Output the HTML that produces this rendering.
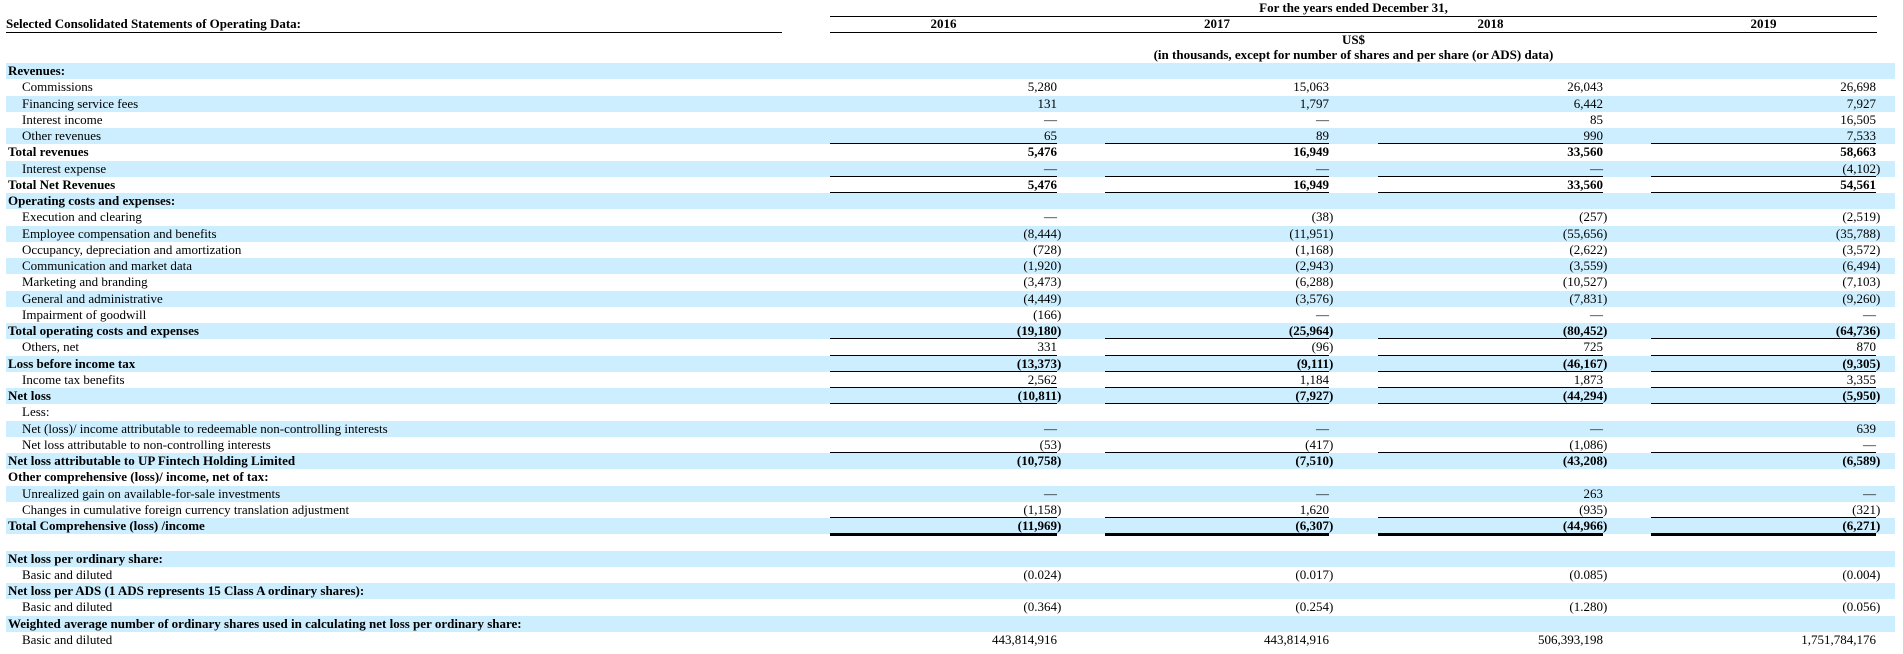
<!DOCTYPE html>
<html><head><meta charset="utf-8"><style>
*{margin:0;padding:0;box-sizing:border-box}
body{width:1903px;height:654px;background:#fff;position:relative;overflow:hidden;font-family:"Liberation Serif","Times New Roman",serif;font-size:13px;color:#000}
.a{position:absolute}
.r{position:absolute;left:6px;width:1889px;height:16.25px;line-height:16px;white-space:nowrap}
.b{background:#cceeff}
.B{font-weight:bold}
.l{position:absolute;left:16px;top:0}
.B .l{left:2px}
.v{position:absolute;top:0;text-align:right;width:227px}
.c1{left:824px}.c2{left:1096px}.c3{left:1370px}.c4{left:1643px}
.p{position:absolute}
.ln{position:absolute;height:1px;background:#000}
.x1{left:830px;width:227px}.x2{left:1105px;width:224px}.x3{left:1378px;width:225px}.x4{left:1651px;width:225px}
.h{font-weight:bold;position:absolute;white-space:nowrap;text-align:center;line-height:16px}
</style></head><body>
<div class="h" style="left:6px;top:16px;text-align:left">Selected Consolidated Statements of Operating Data:</div>
<div class="a" style="left:6px;top:32px;width:776px;height:1px;background:#000"></div>
<div class="h" style="left:830px;top:0px;width:1047px">For the years ended December 31,</div>
<div class="a" style="left:830px;top:16px;width:1047px;height:1px;background:#000"></div>
<div class="h" style="left:830px;top:16px;width:227px">2016</div>
<div class="h" style="left:1105px;top:16px;width:224px">2017</div>
<div class="h" style="left:1378px;top:16px;width:225px">2018</div>
<div class="h" style="left:1651px;top:16px;width:225px">2019</div>
<div class="a" style="left:830px;top:32px;width:1047px;height:1px;background:#000"></div>
<div class="h" style="left:830px;top:33px;width:1047px;line-height:14px">US$</div>
<div class="h" style="left:830px;top:47px;width:1047px;line-height:15px">(in thousands, except for number of shares and per share (or ADS) data)</div>

<div class="r b B" style="top:63px"><span class="l">Revenues:</span></div>
<div class="r" style="top:79px"><span class="l">Commissions</span><div class="v c1">5,280</div><div class="v c2">15,063</div><div class="v c3">26,043</div><div class="v c4">26,698</div></div>
<div class="r b" style="top:96px"><span class="l">Financing service fees</span><div class="v c1">131</div><div class="v c2">1,797</div><div class="v c3">6,442</div><div class="v c4">7,927</div></div>
<div class="r" style="top:112px"><span class="l">Interest income</span><div class="v c1">—</div><div class="v c2">—</div><div class="v c3">85</div><div class="v c4">16,505</div></div>
<div class="r b" style="top:128px"><span class="l">Other revenues</span><div class="v c1">65</div><div class="v c2">89</div><div class="v c3">990</div><div class="v c4">7,533</div></div>
<div class="r B" style="top:144px"><span class="l">Total revenues</span><div class="v c1">5,476</div><div class="v c2">16,949</div><div class="v c3">33,560</div><div class="v c4">58,663</div></div>
<div class="r b" style="top:161px"><span class="l">Interest expense</span><div class="v c1">—</div><div class="v c2">—</div><div class="v c3">—</div><div class="v c4">(4,102<span class="p">)</span></div></div>
<div class="r B" style="top:177px"><span class="l">Total Net Revenues</span><div class="v c1">5,476</div><div class="v c2">16,949</div><div class="v c3">33,560</div><div class="v c4">54,561</div></div>
<div class="r b B" style="top:193px"><span class="l">Operating costs and expenses:</span></div>
<div class="r" style="top:209px"><span class="l">Execution and clearing</span><div class="v c1">—</div><div class="v c2">(38<span class="p">)</span></div><div class="v c3">(257<span class="p">)</span></div><div class="v c4">(2,519<span class="p">)</span></div></div>
<div class="r b" style="top:226px"><span class="l">Employee compensation and benefits</span><div class="v c1">(8,444<span class="p">)</span></div><div class="v c2">(11,951<span class="p">)</span></div><div class="v c3">(55,656<span class="p">)</span></div><div class="v c4">(35,788<span class="p">)</span></div></div>
<div class="r" style="top:242px"><span class="l">Occupancy, depreciation and amortization</span><div class="v c1">(728<span class="p">)</span></div><div class="v c2">(1,168<span class="p">)</span></div><div class="v c3">(2,622<span class="p">)</span></div><div class="v c4">(3,572<span class="p">)</span></div></div>
<div class="r b" style="top:258px"><span class="l">Communication and market data</span><div class="v c1">(1,920<span class="p">)</span></div><div class="v c2">(2,943<span class="p">)</span></div><div class="v c3">(3,559<span class="p">)</span></div><div class="v c4">(6,494<span class="p">)</span></div></div>
<div class="r" style="top:274px"><span class="l">Marketing and branding</span><div class="v c1">(3,473<span class="p">)</span></div><div class="v c2">(6,288<span class="p">)</span></div><div class="v c3">(10,527<span class="p">)</span></div><div class="v c4">(7,103<span class="p">)</span></div></div>
<div class="r b" style="top:291px"><span class="l">General and administrative</span><div class="v c1">(4,449<span class="p">)</span></div><div class="v c2">(3,576<span class="p">)</span></div><div class="v c3">(7,831<span class="p">)</span></div><div class="v c4">(9,260<span class="p">)</span></div></div>
<div class="r" style="top:307px"><span class="l">Impairment of goodwill</span><div class="v c1">(166<span class="p">)</span></div><div class="v c2">—</div><div class="v c3">—</div><div class="v c4">—</div></div>
<div class="r b B" style="top:323px"><span class="l">Total operating costs and expenses</span><div class="v c1">(19,180<span class="p">)</span></div><div class="v c2">(25,964<span class="p">)</span></div><div class="v c3">(80,452<span class="p">)</span></div><div class="v c4">(64,736<span class="p">)</span></div></div>
<div class="r" style="top:339px"><span class="l">Others, net</span><div class="v c1">331</div><div class="v c2">(96<span class="p">)</span></div><div class="v c3">725</div><div class="v c4">870</div></div>
<div class="r b B" style="top:356px"><span class="l">Loss before income tax</span><div class="v c1">(13,373<span class="p">)</span></div><div class="v c2">(9,111<span class="p">)</span></div><div class="v c3">(46,167<span class="p">)</span></div><div class="v c4">(9,305<span class="p">)</span></div></div>
<div class="r" style="top:372px"><span class="l">Income tax benefits</span><div class="v c1">2,562</div><div class="v c2">1,184</div><div class="v c3">1,873</div><div class="v c4">3,355</div></div>
<div class="r b B" style="top:388px"><span class="l">Net loss</span><div class="v c1">(10,811<span class="p">)</span></div><div class="v c2">(7,927<span class="p">)</span></div><div class="v c3">(44,294<span class="p">)</span></div><div class="v c4">(5,950<span class="p">)</span></div></div>
<div class="r" style="top:404px"><span class="l">Less:</span></div>
<div class="r b" style="top:421px"><span class="l">Net (loss)/ income attributable to redeemable non-controlling interests</span><div class="v c1">—</div><div class="v c2">—</div><div class="v c3">—</div><div class="v c4">639</div></div>
<div class="r" style="top:437px"><span class="l">Net loss attributable to non-controlling interests</span><div class="v c1">(53<span class="p">)</span></div><div class="v c2">(417<span class="p">)</span></div><div class="v c3">(1,086<span class="p">)</span></div><div class="v c4">—</div></div>
<div class="r b B" style="top:453px"><span class="l">Net loss attributable to UP Fintech Holding Limited</span><div class="v c1">(10,758<span class="p">)</span></div><div class="v c2">(7,510<span class="p">)</span></div><div class="v c3">(43,208<span class="p">)</span></div><div class="v c4">(6,589<span class="p">)</span></div></div>
<div class="r B" style="top:469px"><span class="l">Other comprehensive (loss)/ income, net of tax:</span></div>
<div class="r b" style="top:486px"><span class="l">Unrealized gain on available-for-sale investments</span><div class="v c1">—</div><div class="v c2">—</div><div class="v c3">263</div><div class="v c4">—</div></div>
<div class="r" style="top:502px"><span class="l">Changes in cumulative foreign currency translation adjustment</span><div class="v c1">(1,158<span class="p">)</span></div><div class="v c2">1,620</div><div class="v c3">(935<span class="p">)</span></div><div class="v c4">(321<span class="p">)</span></div></div>
<div class="r b B" style="top:518px"><span class="l">Total Comprehensive (loss) /income</span><div class="v c1">(11,969<span class="p">)</span></div><div class="v c2">(6,307<span class="p">)</span></div><div class="v c3">(44,966<span class="p">)</span></div><div class="v c4">(6,271<span class="p">)</span></div></div>
<div class="r b B" style="top:551px"><span class="l">Net loss per ordinary share:</span></div>
<div class="r" style="top:567px"><span class="l">Basic and diluted</span><div class="v c1">(0.024<span class="p">)</span></div><div class="v c2">(0.017<span class="p">)</span></div><div class="v c3">(0.085<span class="p">)</span></div><div class="v c4">(0.004<span class="p">)</span></div></div>
<div class="r b B" style="top:583px"><span class="l">Net loss per ADS (1 ADS represents 15 Class A ordinary shares):</span></div>
<div class="r" style="top:599px"><span class="l">Basic and diluted</span><div class="v c1">(0.364<span class="p">)</span></div><div class="v c2">(0.254<span class="p">)</span></div><div class="v c3">(1.280<span class="p">)</span></div><div class="v c4">(0.056<span class="p">)</span></div></div>
<div class="r b B" style="top:616px"><span class="l">Weighted average number of ordinary shares used in calculating net loss per ordinary share:</span></div>
<div class="r" style="top:632px"><span class="l">Basic and diluted</span><div class="v c1">443,814,916</div><div class="v c2">443,814,916</div><div class="v c3">506,393,198</div><div class="v c4">1,751,784,176</div></div>

<div class="ln x1" style="top:143px"></div><div class="ln x2" style="top:143px"></div><div class="ln x3" style="top:143px"></div><div class="ln x4" style="top:143px"></div>
<div class="ln x1" style="top:176px"></div><div class="ln x2" style="top:176px"></div><div class="ln x3" style="top:176px"></div><div class="ln x4" style="top:176px"></div>
<div class="ln x1" style="top:192px"></div><div class="ln x2" style="top:192px"></div><div class="ln x3" style="top:192px"></div><div class="ln x4" style="top:192px"></div>
<div class="ln x1" style="top:338px"></div><div class="ln x2" style="top:338px"></div><div class="ln x3" style="top:338px"></div><div class="ln x4" style="top:338px"></div>
<div class="ln x1" style="top:355px"></div><div class="ln x2" style="top:355px"></div><div class="ln x3" style="top:355px"></div><div class="ln x4" style="top:355px"></div>
<div class="ln x1" style="top:371px"></div><div class="ln x2" style="top:371px"></div><div class="ln x3" style="top:371px"></div><div class="ln x4" style="top:371px"></div>
<div class="ln x1" style="top:387px"></div><div class="ln x2" style="top:387px"></div><div class="ln x3" style="top:387px"></div><div class="ln x4" style="top:387px"></div>
<div class="ln x1" style="top:403px"></div><div class="ln x2" style="top:403px"></div><div class="ln x3" style="top:403px"></div><div class="ln x4" style="top:403px"></div>
<div class="ln x1" style="top:452px"></div><div class="ln x2" style="top:452px"></div><div class="ln x3" style="top:452px"></div><div class="ln x4" style="top:452px"></div>
<div class="ln x1" style="top:517px"></div><div class="ln x2" style="top:517px"></div><div class="ln x3" style="top:517px"></div><div class="ln x4" style="top:517px"></div>
<div class="ln x1" style="top:533px;height:3px"></div><div class="ln x2" style="top:533px;height:3px"></div><div class="ln x3" style="top:533px;height:3px"></div><div class="ln x4" style="top:533px;height:3px"></div>
</body></html>
